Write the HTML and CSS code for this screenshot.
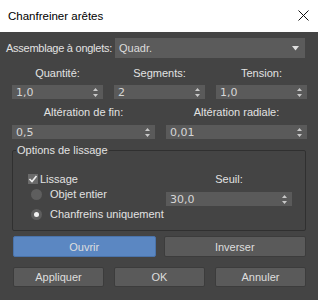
FILE: index.html
```html
<!DOCTYPE html>
<html lang="fr">
<head>
  <meta charset="UTF-8">
  <meta name="viewport" content="width=device-width, initial-scale=1.0">
  <title>Chanfreiner arêtes</title>
  <link rel="stylesheet" href="styles.css">
</head>
<body>
  <div class="dialog">
    <header class="titlebar">
      <span class="title">Chanfreiner arêtes</span>
      <span class="close">
        <svg width="11" height="11" viewBox="0 0 11 11">
          <path d="M0.5 0.5 L10.5 10.5 M10.5 0.5 L0.5 10.5" stroke="#111" stroke-width="1" fill="none"></path>
        </svg>
      </span>
    </header>

    <main class="panel">
      <div class="assembly">
        <label class="assembly-label">Assemblage à onglets:</label>
        <div class="select">
          <span>Quadr.</span>
          <svg class="caret" width="7" height="5" viewBox="0 0 7 5"><path d="M0 0 H7 L3.5 4.5 Z" fill="#e0e0e0"></path></svg>
        </div>
      </div>

      <div class="row row-three">
        <div class="field">
          <label>Quantité:</label>
          <div class="spinner"><span>1,0</span><svg class="arrows" width="5" height="9" viewBox="0 0 5 9"><path d="M2.5 0 L5 3 H0 Z M0 6 H5 L2.5 9 Z" fill="#c8c8c8"></path></svg></div>
        </div>
        <div class="field">
          <label>Segments:</label>
          <div class="spinner"><span>2</span><svg class="arrows" width="5" height="9" viewBox="0 0 5 9"><path d="M2.5 0 L5 3 H0 Z M0 6 H5 L2.5 9 Z" fill="#c8c8c8"></path></svg></div>
        </div>
        <div class="field">
          <label>Tension:</label>
          <div class="spinner"><span>1,0</span><svg class="arrows" width="5" height="9" viewBox="0 0 5 9"><path d="M2.5 0 L5 3 H0 Z M0 6 H5 L2.5 9 Z" fill="#c8c8c8"></path></svg></div>
        </div>
      </div>

      <div class="row row-two">
        <div class="field">
          <label>Altération de fin:</label>
          <div class="spinner"><span>0,5</span><svg class="arrows" width="5" height="9" viewBox="0 0 5 9"><path d="M2.5 0 L5 3 H0 Z M0 6 H5 L2.5 9 Z" fill="#c8c8c8"></path></svg></div>
        </div>
        <div class="field">
          <label>Altération radiale:</label>
          <div class="spinner"><span>0,01</span><svg class="arrows" width="5" height="9" viewBox="0 0 5 9"><path d="M2.5 0 L5 3 H0 Z M0 6 H5 L2.5 9 Z" fill="#c8c8c8"></path></svg></div>
        </div>
      </div>

      <fieldset class="group">
        <legend>Options de lissage</legend>
        <div class="group-body">
          <div class="options">
            <div class="check">
              <span class="box">
                <svg width="10" height="10" viewBox="0 0 10 10"><path d="M1.5 5 L4 7.5 L8.5 2" stroke="#f0f0f0" stroke-width="1.6" fill="none"></path></svg>
              </span>
              <span>Lissage</span>
            </div>
            <div class="radio"><span class="dot"></span><span>Objet entier</span></div>
            <div class="radio radio-last"><span class="dot selected"></span><span>Chanfreins uniquement</span></div>
          </div>
          <div class="threshold">
            <label>Seuil:</label>
            <div class="spinner"><span>30,0</span><svg class="arrows" width="5" height="9" viewBox="0 0 5 9"><path d="M2.5 0 L5 3 H0 Z M0 6 H5 L2.5 9 Z" fill="#c8c8c8"></path></svg></div>
          </div>
        </div>
      </fieldset>

      <div class="actions actions-two">
        <button type="button" class="primary">Ouvrir</button>
        <button type="button">Inverser</button>
      </div>
      <div class="actions actions-three">
        <button type="button">Appliquer</button>
        <button type="button">OK</button>
        <button type="button">Annuler</button>
      </div>
    </main>
  </div>
</body>
</html>
```

FILE: styles.css
```css
body {
  margin: 0;
  font-family: "Liberation Sans", Arial, sans-serif;
  font-size: 11px;
}
.dialog {
  width: 318px;
  height: 300px;
  display: flex;
  flex-direction: column;
}
.titlebar {
  height: 32px;
  background-color: #fff;
  display: flex;
  align-items: center;
  justify-content: space-between;
  padding: 0 9px 0 8px;
}
.title {
  color: #000;
  font-size: 11.5px;
}
.close svg {
  display: block;
  margin-top: -1px;
}
.panel {
  flex: 1;
  background-color: #444;
  color: #e2e2e2;
  padding: 6px 11px 0 12px;
}
label {
  display: block;
  line-height: 14px;
  white-space: nowrap;
}

/* top dropdown */
.assembly {
  display: flex;
  align-items: center;
  margin-left: -6px;
  margin-right: 2px;
}
.assembly-label {
  width: 109px;
  flex-shrink: 0;
  letter-spacing: -0.25px;
}
.select {
  flex: 1;
  height: 20px;
  background-color: #5b5b5b;
  display: flex;
  align-items: center;
  justify-content: space-between;
  padding: 0 6px 0 4px;
  color: #dcdcdc;
}

/* spinner rows */
.row {
  display: grid;
  column-gap: 11px;
}
.row-three {
  grid-template-columns: repeat(3, 1fr);
  margin-top: 8px;
}
.row-two {
  grid-template-columns: 143px 1fr;
  margin-top: 6px;
}
.field label {
  text-align: center;
}
.spinner {
  height: 14px;
  margin-top: 5px;
  background-color: #5a5a5a;
  display: flex;
  align-items: center;
  justify-content: space-between;
  padding: 0 5px 0 4px;
  color: #d6d6d6;
  font-family: "DejaVu Sans", sans-serif;
  font-size: 11px;
}
.row-two .spinner {
  margin-top: 6px;
}

/* smoothing group */
.group {
  margin: 4px 1px 0 0;
  padding: 0;
  border: 1px solid #303030;
  border-radius: 2px;
}
.group legend {
  margin-left: 3px;
  padding: 0 1px;
  line-height: 14px;
}
.group-body {
  display: flex;
  justify-content: space-between;
  padding: 15px 13px 9px 0;
}
.options {
  padding-left: 15px;
  white-space: nowrap;
  flex-shrink: 0;
}
.check,
.radio {
  display: flex;
  align-items: center;
  height: 14px;
}
.box {
  width: 10px;
  height: 10px;
  background-color: #6a6a6a;
  margin-right: 2px;
}
.box svg {
  display: block;
}
.radio {
  margin-top: 1px;
}
.radio-last {
  margin-top: 6px;
}
.dot {
  width: 11px;
  height: 11px;
  border-radius: 50%;
  background-color: #5e5e5e;
  margin: 0 8px 0 3px;
  display: flex;
  align-items: center;
  justify-content: center;
  flex-shrink: 0;
}
.dot.selected::after {
  content: "";
  width: 5px;
  height: 5px;
  border-radius: 50%;
  background-color: #f2f2f2;
}
.threshold {
  width: 126px;
  flex-shrink: 0;
}
.threshold label {
  text-align: center;
}
.threshold .spinner {
  margin-top: 6px;
}

/* buttons */
.actions {
  display: grid;
  margin-right: 1px;
  margin-left: 1px;
}
.actions-two {
  grid-template-columns: 1fr 1fr;
  column-gap: 8px;
  margin-top: 5px;
}
.actions-three {
  grid-template-columns: repeat(3, 1fr);
  column-gap: 10px;
  margin-top: 10px;
}
button {
  height: 21px;
  font-family: "Liberation Sans", Arial, sans-serif;
  font-size: 11px;
  color: #dedede;
  background-color: #5a5a5a;
  border: 1px solid #3c3c3c;
  border-radius: 2px;
  padding: 0;
}
.actions-three button {
  height: 20px;
}
button.primary {
  background-color: #5b87c2;
  border-color: #4a73aa;
}
```
